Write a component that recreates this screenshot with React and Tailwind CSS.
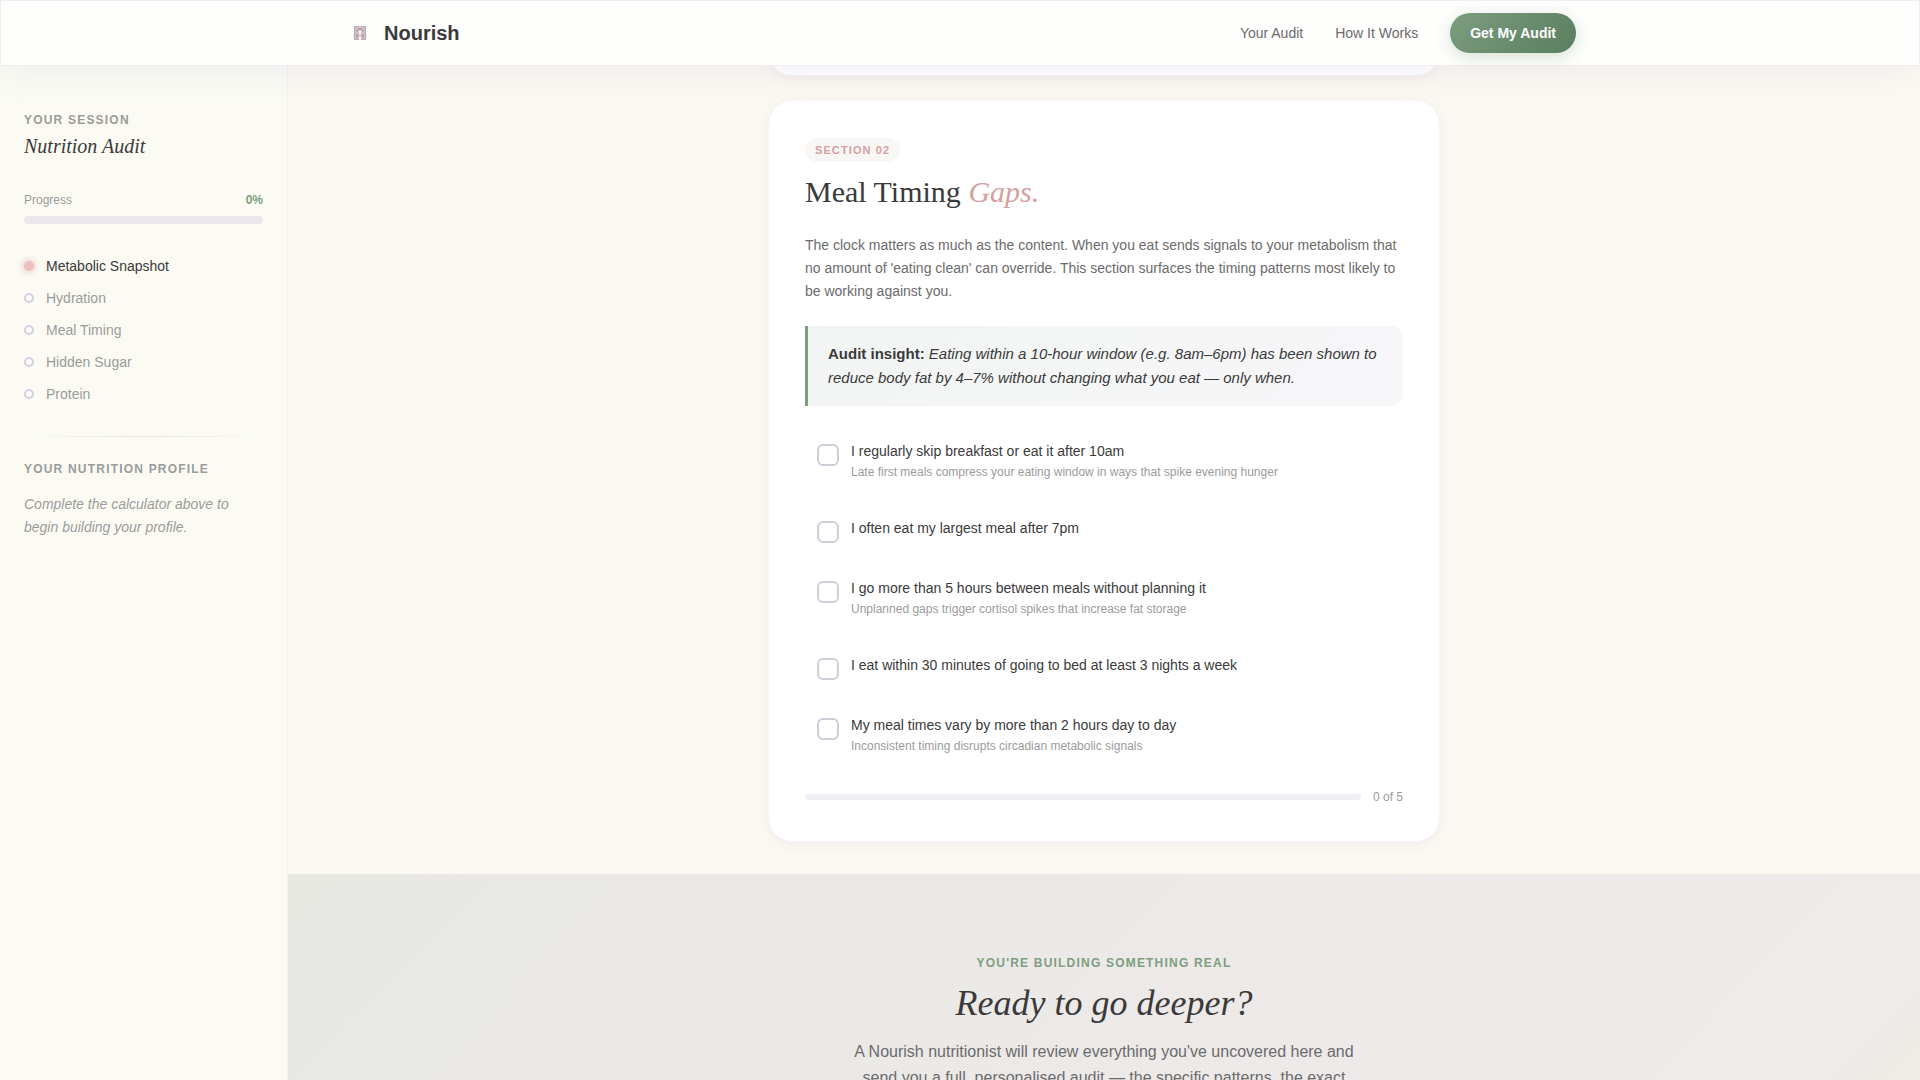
import React, { useState } from "react";

const STEPS = [
  "Metabolic Snapshot",
  "Hydration",
  "Meal Timing",
  "Hidden Sugar",
  "Protein",
];

const HABITS = [
  {
    id: "breakfast",
    label: "I regularly skip breakfast or eat it after 10am",
    note: "Late first meals compress your eating window in ways that spike evening hunger",
  },
  { id: "late-meal", label: "I often eat my largest meal after 7pm" },
  {
    id: "long-gaps",
    label: "I go more than 5 hours between meals without planning it",
    note: "Unplanned gaps trigger cortisol spikes that increase fat storage",
  },
  {
    id: "bedtime",
    label: "I eat within 30 minutes of going to bed at least 3 nights a week",
  },
  {
    id: "irregular",
    label: "My meal times vary by more than 2 hours day to day",
    note: "Inconsistent timing disrupts circadian metabolic signals",
  },
];

const Logo = () => (
  <svg width="12" height="16" viewBox="0 0 12 16" aria-hidden="true">
    <rect x="0.5" y="1.5" width="11" height="13" fill="#cfc1c4" stroke="#b9a8ac" />
    <path
      d="M3 4.5v2M3 9.5v3M9 4.5v2M9 9.5v3M4.5 4h3"
      fill="none"
      stroke="#a3949a"
      strokeWidth="1.5"
    />
    <path d="M5 5.5h2v3.5H5zM5 11.5h2V15H5zM5.5 1h1v1h-1z" fill="#f8f5f4" />
  </svg>
);

const Header = () => (
  <header className="sticky top-0 z-20 border border-[#f0eeef] bg-[#fefefd] shadow-[0_8px_32px_rgba(180,170,210,0.15)]">
    <div className="mx-auto flex h-16 max-w-7xl items-center justify-between px-6">
      <a href="#top" className="flex items-center gap-2">
        <span className="flex size-8 items-center justify-center">
          <Logo />
        </span>
        <span className="text-xl font-bold text-[#3a3a3a]">Nourish</span>
      </a>
      <nav className="flex items-center gap-8 text-sm text-[#6b6b6b]">
        <a href="#audit">Your Audit</a>
        <a href="#how">How It Works</a>
        <button
          type="button"
          className="h-10 rounded-full bg-linear-135 from-[#7d9e7f] to-[#5a7d5f] px-5 font-bold text-white shadow-[0_4px_16px_rgba(125,158,127,0.3)]"
        >
          Get My Audit
        </button>
      </nav>
    </div>
  </header>
);

const Sidebar = () => (
  <aside className="sticky top-[66px] h-[calc(100vh-66px)] w-72 shrink-0 border-r border-[#f3f1f1] bg-[#fbfbf4] px-6 pt-11">
    <p className="text-xs leading-5 font-bold tracking-[1.2px] text-[#9b9b9b] uppercase">
      Your Session
    </p>
    <h2 className="mt-1 font-['Liberation_Serif',serif] text-xl leading-6 text-[#3a3a3a] italic">
      Nutrition Audit
    </h2>

    <div className="mt-8 flex justify-between text-xs leading-5">
      <span className="text-[#9b9b9b]">Progress</span>
      <span className="font-bold text-[#7d9e7f]">0%</span>
    </div>
    <div className="mt-1.5 h-2 rounded-full bg-[#eae8eb]" />

    <ol className="mt-6.5">
      {STEPS.map((step, i) => (
        <li key={step} className="flex h-8 items-center gap-3 text-sm">
          {i === 0 ? (
            <span className="size-2.5 rounded-full bg-[#ebbfbf] shadow-[0_0_4px_3px_rgba(232,185,185,0.4)]" />
          ) : (
            <span className="size-2.5 rounded-full border-2 border-[#d5d0e2]" />
          )}
          <a
            href="#audit"
            className={i === 0 ? "text-[#3a3a3a]" : "text-[#9b9b9b]"}
          >
            {step}
          </a>
        </li>
      ))}
    </ol>

    <div className="mt-6.5 h-px bg-linear-to-r from-transparent via-[#e4e2e7] to-transparent" />

    <p className="mt-5 text-xs leading-6 font-bold tracking-[1.2px] text-[#9b9b9b] uppercase">
      Your Nutrition Profile
    </p>
    <p className="mt-3 text-sm leading-[23px] text-[#9b9b9b] italic">
      Complete the calculator above to begin building your profile.
    </p>
  </aside>
);

const MealTiming = () => {
  const [checked, setChecked] = useState([]);

  const toggle = (id) => {
    setChecked(
      checked.includes(id) ? checked.filter((c) => c !== id) : [...checked, id]
    );
  };

  return (
    <section className="mt-6 rounded-3xl border border-[#f6f4f6] bg-white p-9 shadow-[0_2px_14px_rgba(160,150,190,0.14)]">
      <span className="inline-block rounded-full bg-[#f9f6f6] px-2.5 text-[11px] leading-6 font-bold tracking-[1.1px] text-[#d4a0a0] uppercase">
        Section 02
      </span>
      <h1 className="mt-2.5 font-['Liberation_Serif',serif] text-3xl leading-10 text-[#3a3a3a]">
        Meal Timing <em className="text-[#d4a0a0]">Gaps.</em>
      </h1>
      <p className="mt-5.5 text-sm leading-[23px] text-[#6b6b6b]">
        The clock matters as much as the content. When you eat sends signals to
        your metabolism that no amount of 'eating clean' can override. This
        section surfaces the timing patterns most likely to be working against
        you.
      </p>

      <div className="mt-[23px] rounded-r-xl border-l-3 border-[#7d9e7f] bg-linear-135 from-[#f2f5f3] to-[#f7f6f9] px-5 py-4 text-[15px] leading-6 text-[#3a3a3a] italic">
        <strong className="not-italic">Audit insight:</strong> Eating within a
        10-hour window (e.g. 8am–6pm) has been shown to reduce body fat by 4–7%
        without changing what you eat — only when.
      </div>

      <ul className="mt-5.5 flex flex-col gap-2.5">
        {HABITS.map((habit) => (
          <li key={habit.id}>
            <label
              htmlFor={habit.id}
              className="flex cursor-pointer items-start gap-3 p-3"
            >
              <input
                id={habit.id}
                type="checkbox"
                checked={checked.includes(habit.id)}
                onChange={() => toggle(habit.id)}
                className="mt-1 size-[22px] shrink-0 appearance-none rounded-md border-2 border-[#d0cddb] bg-white checked:border-[#7d9e7f] checked:bg-[#7d9e7f]"
              />
              <span className="pb-0.5">
                <span className="block text-sm leading-[22px] text-[#3a3a3a]">
                  {habit.label}
                </span>
                {habit.note && (
                  <span className="mt-0.5 block text-xs leading-[17px] text-[#9b9b9b]">
                    {habit.note}
                  </span>
                )}
              </span>
            </label>
          </li>
        ))}
      </ul>

      <div className="mt-5 flex items-center gap-3">
        <div className="h-1.5 flex-1 overflow-hidden rounded-full bg-[#f0eff3]">
          <div
            className="h-full bg-[#7d9e7f]"
            style={{ width: `${(checked.length / HABITS.length) * 100}%` }}
          />
        </div>
        <span className="text-xs text-[#9b9b9b]">
          {checked.length} of {HABITS.length}
        </span>
      </div>
    </section>
  );
};

const CallToAction = () => (
  <section className="mt-8 border-t border-[#e9e7e4] bg-linear-135 from-[#e8e8e3] via-[#eeeaea] via-75% to-[#eeece6] px-6 py-20 text-center">
    <p className="text-xs leading-4 font-bold tracking-[1.2px] text-[#7d9e7f] uppercase">
      You're building something real
    </p>
    <h2 className="mt-3 font-['Liberation_Serif',serif] text-4xl text-[#3a3a3a] italic">
      Ready to go deeper?
    </h2>
    <p className="mx-auto mt-4 max-w-lg text-base leading-[26px] text-[#6b6b6b]">
      A Nourish nutritionist will review everything you've uncovered here and
      send you a full, personalised audit — the specific patterns, the exact
    </p>
  </section>
);

const App = () => (
  <div
    id="top"
    className="min-h-screen bg-[#fcf9f2] font-['Liberation_Sans',Arial,sans-serif]"
  >
    <Header />
    <div className="flex items-start">
      <Sidebar />
      <main className="min-w-0 flex-1">
        <div id="audit" className="mx-auto max-w-2xl">
          {/* end of the previous section, tucked under the header */}
          <div className="-mt-14 h-[66px] rounded-b-3xl border border-[#f6f4f6] bg-white shadow-[0_2px_14px_rgba(160,150,190,0.14)]" />
          <MealTiming />
        </div>
        <CallToAction />
      </main>
    </div>
  </div>
);

export default App;
